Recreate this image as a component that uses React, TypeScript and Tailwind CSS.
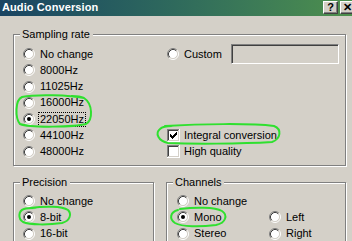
import React from "react";

function Radio({ checked }: { checked?: boolean }) {
  return (
    <svg width="12" height="12" viewBox="0 0 12 12" className="block shrink-0">
      <circle cx="6" cy="6" r="4.6" fill="#ffffff" />
      <path d="M2.11 9.89 A5.5 5.5 0 0 1 9.89 2.11" fill="none" stroke="#808080" strokeWidth="1" />
      <path d="M9.89 2.11 A5.5 5.5 0 0 1 2.11 9.89" fill="none" stroke="#ffffff" strokeWidth="1" />
      <path d="M2.82 9.18 A4.5 4.5 0 0 1 9.18 2.82" fill="none" stroke="#404040" strokeWidth="1" />
      <path d="M9.18 2.82 A4.5 4.5 0 0 1 2.82 9.18" fill="none" stroke="#d4d0c8" strokeWidth="1" />
      {checked && <circle cx="6" cy="6" r="2" fill="#000000" />}
    </svg>
  );
}

function CheckBox({ checked }: { checked?: boolean }) {
  const cols: [number, number][] = [
    [3, 5],
    [4, 6],
    [5, 7],
    [6, 6],
    [7, 5],
    [8, 4],
    [9, 3],
  ];
  return (
    <svg width="13" height="13" viewBox="0 0 13 13" shapeRendering="crispEdges" className="block shrink-0">
      <rect x="0" y="0" width="13" height="13" fill="#ffffff" />
      <rect x="0" y="0" width="12" height="1" fill="#808080" />
      <rect x="0" y="0" width="1" height="12" fill="#808080" />
      <rect x="1" y="1" width="10" height="1" fill="#404040" />
      <rect x="1" y="1" width="1" height="10" fill="#404040" />
      <rect x="1" y="11" width="11" height="1" fill="#d4d0c8" />
      <rect x="11" y="1" width="1" height="11" fill="#d4d0c8" />
      {checked &&
        cols.map(([x, y]) => <rect key={x} x={x} y={y} width="1" height="3" fill="#000000" />)}
    </svg>
  );
}

function RadioRow({
  label,
  checked,
  focus,
}: {
  label: string;
  checked?: boolean;
  focus?: boolean;
}) {
  return (
    <div className="flex items-center h-[16.25px]">
      <Radio checked={checked} />
      <span
        className={
          "ml-[3px] px-[1px] leading-[13px] border border-dotted whitespace-nowrap " +
          (focus ? "border-black" : "border-transparent")
        }
      >
        {label}
      </span>
    </div>
  );
}

function CheckRow({ label, checked }: { label: string; checked?: boolean }) {
  return (
    <div className="flex items-center h-[16.25px]">
      <CheckBox checked={checked} />
      <span className="ml-[4px] leading-[13px] whitespace-nowrap">{label}</span>
    </div>
  );
}

function Group({
  label,
  className,
  children,
}: {
  label: string;
  className: string;
  children: React.ReactNode;
}) {
  return (
    <div
      className={
        "relative border border-[#808080] shadow-[inset_1px_1px_0_#ffffff,1px_1px_0_#ffffff] " +
        className
      }
    >
      <span className="absolute top-[-7px] left-[6px] px-[2px] pr-[3px] bg-[#d4d0c8] leading-[13px] whitespace-nowrap">
        {label}
      </span>
      {children}
    </div>
  );
}

function CaptionButton({ children }: { children: React.ReactNode }) {
  return (
    <div className="w-[15px] h-[13px] bg-[#d4d0c8] border border-t-white border-l-white border-b-[#404040] border-r-[#404040] shadow-[inset_-1px_-1px_0_#808080] flex items-center justify-center text-black font-bold text-[11px] leading-none shrink-0">
      {children}
    </div>
  );
}

export default function App() {
  return (
    <div className="relative w-[352px] h-[241px] overflow-hidden bg-[#d4d0c8] text-black text-[11px] font-['Liberation_Sans',Arial,sans-serif]">
      {/* Title bar */}
      <div className="h-[16px] flex items-start bg-linear-to-r from-[#1a4462] via-[#2f6a5c] to-[#4e904c]">
        <span className="pl-[2px] text-white font-bold text-[11px] leading-[14px] tracking-[0.1px]">
          Audio Conversion
        </span>
        <div className="ml-auto flex gap-[2px] mt-[1px] mr-[-3px]">
          <CaptionButton>?</CaptionButton>
          <CaptionButton>
            <span className="text-[11px] font-bold">✕</span>
          </CaptionButton>
        </div>
      </div>

      <div className="pl-[13px] pr-[6px] pt-[18px] flex flex-col">
        <Group label="Sampling rate" className="h-[132px]">
          <div className="flex pt-[11px] pl-[9px]">
            <div className="w-[144px] flex flex-col">
              <RadioRow label="No change" />
              <RadioRow label="8000Hz" />
              <RadioRow label="11025Hz" />
              <RadioRow label="16000Hz" />
              <RadioRow label="22050Hz" checked focus />
              <RadioRow label="44100Hz" />
              <RadioRow label="48000Hz" />
            </div>
            <div className="flex flex-col">
              <div className="flex items-center h-[16.25px]">
                <Radio />
                <span className="ml-[3px] px-[1px] border border-transparent leading-[13px] w-[49px]">
                  Custom
                </span>
                <div className="w-[108px] h-[20px] shrink-0 bg-[#d4d0c8] border border-t-[#808080] border-l-[#808080] border-b-white border-r-white shadow-[inset_1px_1px_0_#404040,inset_-1px_-1px_0_#d4d0c8]" />
              </div>
              <div className="h-[65px]" />
              <CheckRow label="Integral conversion" checked />
              <CheckRow label="High quality" />
            </div>
          </div>
        </Group>

        <div className="flex gap-[12px] mt-[16px]">
          <Group label="Precision" className="w-[141px] h-[80px] shrink-0">
            <div className="flex flex-col pt-[10px] pl-[9px]">
              <RadioRow label="No change" />
              <RadioRow label="8-bit" checked />
              <RadioRow label="16-bit" />
            </div>
          </Group>
          <Group label="Channels" className="w-[180px] h-[80px] shrink-0">
            <div className="flex pt-[10px] pl-[10px]">
              <div className="w-[92px] flex flex-col">
                <RadioRow label="No change" />
                <RadioRow label="Mono" checked />
                <RadioRow label="Stereo" />
              </div>
              <div className="flex flex-col">
                <div className="h-[16.25px]" />
                <RadioRow label="Left" />
                <RadioRow label="Right" />
              </div>
            </div>
          </Group>
        </div>
      </div>

      {/* hand-drawn green annotations */}
      <svg
        className="absolute inset-0 pointer-events-none"
        width="352"
        height="241"
        viewBox="0 0 352 241"
        fill="none"
        stroke="#2fe02f"
        strokeWidth="2"
        strokeLinecap="round"
        strokeLinejoin="round"
      >
        <path d="M84 98 C70 95, 35 94, 22 97 C15 100, 15 118, 20 124 C30 128, 75 127, 86 124 C93 120, 93 104, 84 98 C80 96, 76 96, 72 96" />
        <path d="M165 126 C200 124, 250 123, 274 126 C282 129, 281 139, 272 142 C240 144, 190 144, 168 143 C158 141, 155 133, 160 129 C162 127, 166 126, 172 126" />
        <path d="M30 208 C45 206, 62 206, 68 210 C72 214, 70 221, 62 223 C48 225, 30 225, 23 222 C18 219, 18 211, 24 209 C27 208, 32 208, 36 208" />
        <path d="M180 209 C195 207, 215 207, 222 211 C228 215, 226 223, 216 225 C200 227, 182 227, 175 223 C169 219, 170 212, 178 210" />
      </svg>
    </div>
  );
}
